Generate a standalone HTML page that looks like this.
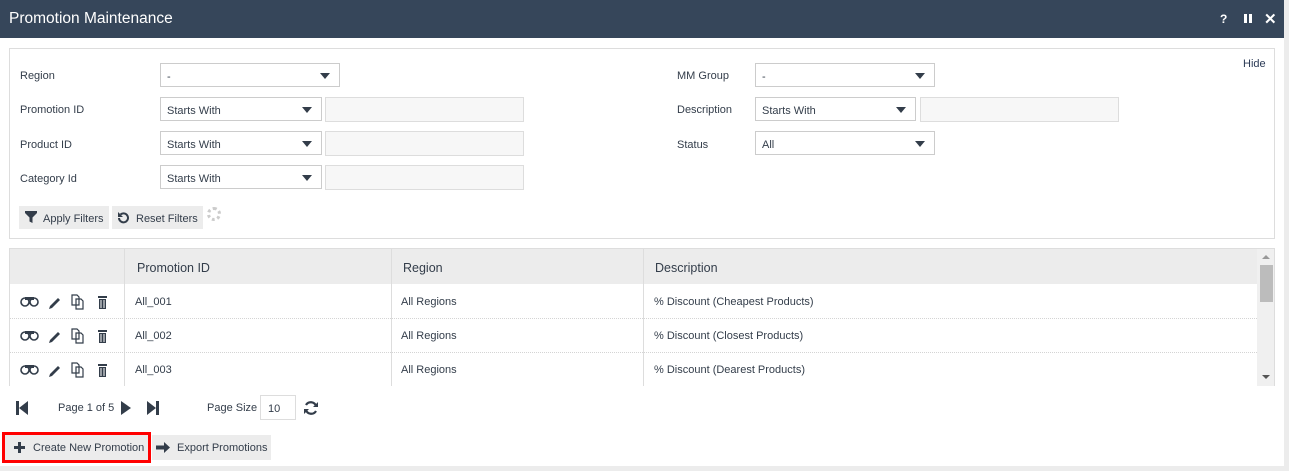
<!DOCTYPE html>
<html><head><style>
*{box-sizing:border-box;margin:0;padding:0}
body{width:1289px;height:471px;background:#fff;font-family:"Liberation Sans",sans-serif;color:#333d4a;position:relative;overflow:hidden;font-size:11px}
.a{position:absolute}
.hdr{left:0;top:0;width:1284px;height:38px;background:#36465a;color:#fff}
.sel{position:absolute;height:24px;border:1px solid #ccc;background:#fff;font-size:11px;padding:7px 0 0 6px}
.sel:after{content:"";position:absolute;right:9px;top:9px;border-left:5px solid transparent;border-right:5px solid transparent;border-top:6px solid #333d4a}
.inp{position:absolute;height:25px;border:1px solid #ddd;background:#f7f7f7}
.lbl{position:absolute;font-size:11px}
.btn{position:absolute;background:#ececec;height:23px;font-size:11px;padding:7px 0 0 0}
.cell{position:absolute;font-size:11px}
.th{position:absolute;font-size:12.5px;top:261px}
.dot{position:absolute;left:10px;width:1247px;border-top:1px dotted #d4d4d4}
</style></head><body>
<div class="a hdr"><div class="a" style="left:9px;top:10px;font-size:15.5px">Promotion Maintenance</div>
<div class="a" style="left:1220px;top:12px;font-weight:bold;font-size:12px">?</div>
<div class="a" style="left:1244px;top:14px;width:3px;height:9px;background:#fff"></div><div class="a" style="left:1249px;top:14px;width:3px;height:9px;background:#fff"></div>
<div class="a" style="left:1264px;top:10px;font-weight:bold;font-size:15px">✕</div></div>
<div class="a" style="left:1284px;top:0;width:5px;height:471px;background:#ececec"></div>
<div class="a" style="left:0;top:466px;width:1289px;height:5px;background:#ececec"></div>

<div class="a" style="left:9px;top:48px;width:1266px;height:191px;border:1px solid #ddd"></div>
<div class="lbl" style="left:1243px;top:58px;color:#2b3a55">Hide</div>
<div class="lbl" style="left:20px;top:70px">Region</div>
<div class="lbl" style="left:20px;top:104px">Promotion ID</div>
<div class="lbl" style="left:20px;top:139px">Product ID</div>
<div class="lbl" style="left:20px;top:173px">Category Id</div>
<div class="sel" style="left:160px;top:63px;width:180px">-</div>
<div class="sel" style="left:160px;top:97px;width:162px">Starts With</div><div class="inp" style="left:325px;top:97px;width:199px"></div>
<div class="sel" style="left:160px;top:131px;width:162px">Starts With</div><div class="inp" style="left:325px;top:131px;width:199px"></div>
<div class="sel" style="left:160px;top:165px;width:162px">Starts With</div><div class="inp" style="left:325px;top:165px;width:199px"></div>
<div class="lbl" style="left:677px;top:70px">MM Group</div>
<div class="lbl" style="left:677px;top:104px">Description</div>
<div class="lbl" style="left:677px;top:139px">Status</div>
<div class="sel" style="left:755px;top:63px;width:180px">-</div>
<div class="sel" style="left:755px;top:97px;width:161px">Starts With</div><div class="inp" style="left:920px;top:97px;width:199px"></div>
<div class="sel" style="left:755px;top:131px;width:180px">All</div>

<div class="btn" style="left:19px;top:206px;width:90px"><svg class="a" style="left:6px;top:5px" width="12" height="13" viewBox="0 0 12 13"><path d="M0 0H12V2L7.5 6.5V12L4.5 10.5V6.5L0 2Z" fill="#333d4a"/></svg><span style="margin-left:24px">Apply Filters</span></div>
<div class="btn" style="left:112px;top:206px;width:91px"><svg class="a" style="left:5px;top:5px" width="13" height="13" viewBox="0 0 13 13"><path d="M3.5 3.5A4.5 4.5 0 1 1 2 7" stroke="#333d4a" stroke-width="2" fill="none"/><path d="M1 1V6H6Z" fill="#333d4a"/></svg><span style="margin-left:24px">Reset Filters</span></div>
<div class="a" style="left:207px;top:207px;width:14px;height:14px;border-radius:50%;border:3px dotted #ccc"></div>

<div class="a" style="left:9px;top:248px;width:1266px;height:138px;border:1px solid #ddd;border-bottom:none"></div>
<div class="a" style="left:10px;top:249px;width:1247px;height:35px;background:#ececec"></div>
<div class="a" style="left:1257px;top:249px;width:17px;height:137px;background:#f0f0f0"></div>
<div class="a" style="left:1260px;top:265px;width:13px;height:37px;background:#bcbcbc"></div>
<div class="a" style="left:1262px;top:255px;border-left:4px solid transparent;border-right:4px solid transparent;border-bottom:4px solid #999"></div>
<div class="a" style="left:1262px;top:375px;border-left:4px solid transparent;border-right:4px solid transparent;border-top:4px solid #555"></div>
<div class="a" style="left:124px;top:249px;height:137px;border-left:1px solid #ddd"></div>
<div class="a" style="left:391px;top:249px;height:137px;border-left:1px solid #ddd"></div>
<div class="a" style="left:643px;top:249px;height:137px;border-left:1px solid #ddd"></div>
<div class="th" style="left:137px">Promotion ID</div>
<div class="th" style="left:403px">Region</div>
<div class="th" style="left:655px">Description</div>
<div class="dot" style="top:318px"></div><div class="dot" style="top:352px"></div>

<div class="cell" style="left:135px;top:296px">All_001</div><div class="cell" style="left:401px;top:296px">All Regions</div><div class="cell" style="left:654px;top:296px">% Discount (Cheapest Products)</div>
<div class="cell" style="left:135px;top:330px">All_002</div><div class="cell" style="left:401px;top:330px">All Regions</div><div class="cell" style="left:654px;top:330px">% Discount (Closest Products)</div>
<div class="cell" style="left:135px;top:364px">All_003</div><div class="cell" style="left:401px;top:364px">All Regions</div><div class="cell" style="left:654px;top:364px">% Discount (Dearest Products)</div>

<svg class="a" style="left:20px;top:293px" width="95" height="85" viewBox="0 0 95 85">
<g id="ic">
<circle cx="5" cy="9" r="4" stroke="#333d4a" stroke-width="1.6" fill="none"/><circle cx="14" cy="9" r="4" stroke="#333d4a" stroke-width="1.6" fill="none"/><rect x="5" y="4" width="9" height="3" fill="#333d4a"/>
<path d="M30 13L38 5L40 7L32 15L29 16Z" fill="#333d4a"/>
<path d="M52 2H57L59 4V12H52Z M56 6H61L63 8V16H56Z" stroke="#333d4a" stroke-width="1.2" fill="#fff"/>
<path d="M78 3H87V5H78Z M79 6H86V16H79Z" fill="#333d4a"/><path d="M81 7V15M84 7V15" stroke="#fff" stroke-width="1"/>
</g>
<use href="#ic" y="34"/><use href="#ic" y="68"/>
</svg>

<svg class="a" style="left:16px;top:401px" width="14" height="14"><rect x="0" y="0" width="3" height="14" fill="#333d4a"/><path d="M12 0V14L3 7Z" fill="#333d4a"/></svg>
<div class="a" style="left:58px;top:402px">Page <b style="font-weight:normal">1</b> of 5</div>
<svg class="a" style="left:121px;top:401px" width="10" height="14"><path d="M0 0V14L10 7Z" fill="#333d4a"/></svg>
<svg class="a" style="left:147px;top:401px" width="13" height="14"><path d="M0 0V14L9 7Z" fill="#333d4a"/><rect x="9" y="0" width="3" height="14" fill="#333d4a"/></svg>
<div class="a" style="left:207px;top:402px">Page Size</div>
<div class="a" style="left:260px;top:395px;width:36px;height:25px;border:1px solid #ddd;padding:7px 0 0 7px">10</div>
<svg class="a" style="left:303px;top:400px" width="16" height="16" viewBox="0 0 16 16"><path d="M13 6A5.5 5.5 0 0 0 3 5M3 10A5.5 5.5 0 0 0 13 11" stroke="#333d4a" stroke-width="2.2" fill="none"/><path d="M15 2V7H10Z M1 14V9H6Z" fill="#333d4a"/></svg>

<div class="a" style="left:2px;top:432px;width:149px;height:31px;border:3px solid #f00"></div>
<div class="btn" style="left:5px;top:435px;width:143px;height:25px;padding-top:7px"><svg class="a" style="left:9px;top:7px" width="11" height="11"><path d="M4 0H7V4H11V7H7V11H4V7H0V4H4Z" fill="#333d4a"/></svg><span style="margin-left:28px">Create New Promotion</span></div>
<div class="btn" style="left:152px;top:435px;width:119px;height:25px;padding-top:7px"><svg class="a" style="left:4px;top:7px" width="14" height="11"><path d="M0 3.5H8V0L14 5.5L8 11V7.5H0Z" fill="#333d4a"/></svg><span style="margin-left:25px">Export Promotions</span></div>
</body></html>
